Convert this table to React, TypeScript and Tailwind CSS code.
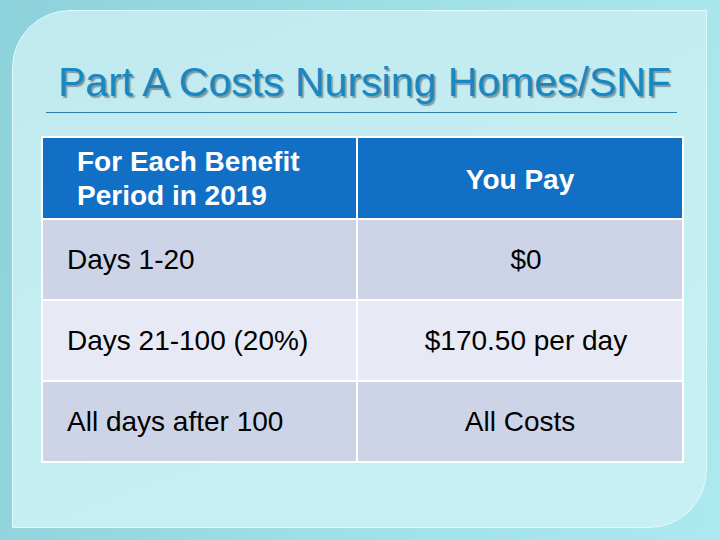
import React from "react";

const rows = [
  { a: "Days 1-20", b: "$0", bg: "bg-[#cdd4e8]", pad: "pl-[12px]" },
  { a: "Days 21-100 (20%)", b: "$170.50 per day", bg: "bg-[#e7eaf4]", pad: "pl-[12px]" },
  { a: "All days after 100", b: "All Costs", bg: "bg-[#cdd4e8]", pad: "pl-0" },
];

export default function App() {
  return (
    <div className="w-[720px] h-[540px] overflow-hidden bg-[linear-gradient(100deg,#8dd1da_0%,#9fdfe6_50%,#ace9ee_100%)] pt-[10px] pl-[12px] pr-[13px] pb-[12px] font-['Liberation_Sans',Arial,sans-serif]">
      <div className="h-full w-full rounded-tl-[58px] rounded-br-[58px] border border-[#e2fafc] bg-[linear-gradient(160deg,#c0eaef_0%,#c4eef2_50%,#c8f0f4_100%)] flex flex-col">
        <div className="mt-[51px] pl-[45px] h-[41px] text-[41px] leading-[41px] text-[#1888c4] [text-shadow:2px_2px_1px_#869aa3] whitespace-nowrap">
          Part A Costs Nursing Homes/SNF
        </div>
        <div className="mt-[9px] ml-[33px] w-[631px] h-[1px] bg-[#2c7fa6]" />
        <div className="mt-[23px] ml-[28px] w-[643px] bg-white p-[2px] grid grid-cols-[313px_324px] gap-[2px]">
          <div className="h-[80px] bg-[#126fc6] flex items-center pl-[34px] pt-[2px] text-white font-bold text-[28px] leading-[34px]">
            <div>
              For Each Benefit
              <br />
              Period in 2019
            </div>
          </div>
          <div className="h-[80px] bg-[#126fc6] flex items-center justify-center pt-[3px] text-white font-bold text-[28px]">
            You Pay
          </div>
          {rows.map((r) => (
            <React.Fragment key={r.a}>
              <div className={`h-[79px] ${r.bg} flex items-center pl-[24px] text-[28px] text-black`}>
                {r.a}
              </div>
              <div className={`h-[79px] ${r.bg} ${r.pad} flex items-center justify-center text-[28px] text-black`}>
                {r.b}
              </div>
            </React.Fragment>
          ))}
        </div>
      </div>
    </div>
  );
}
